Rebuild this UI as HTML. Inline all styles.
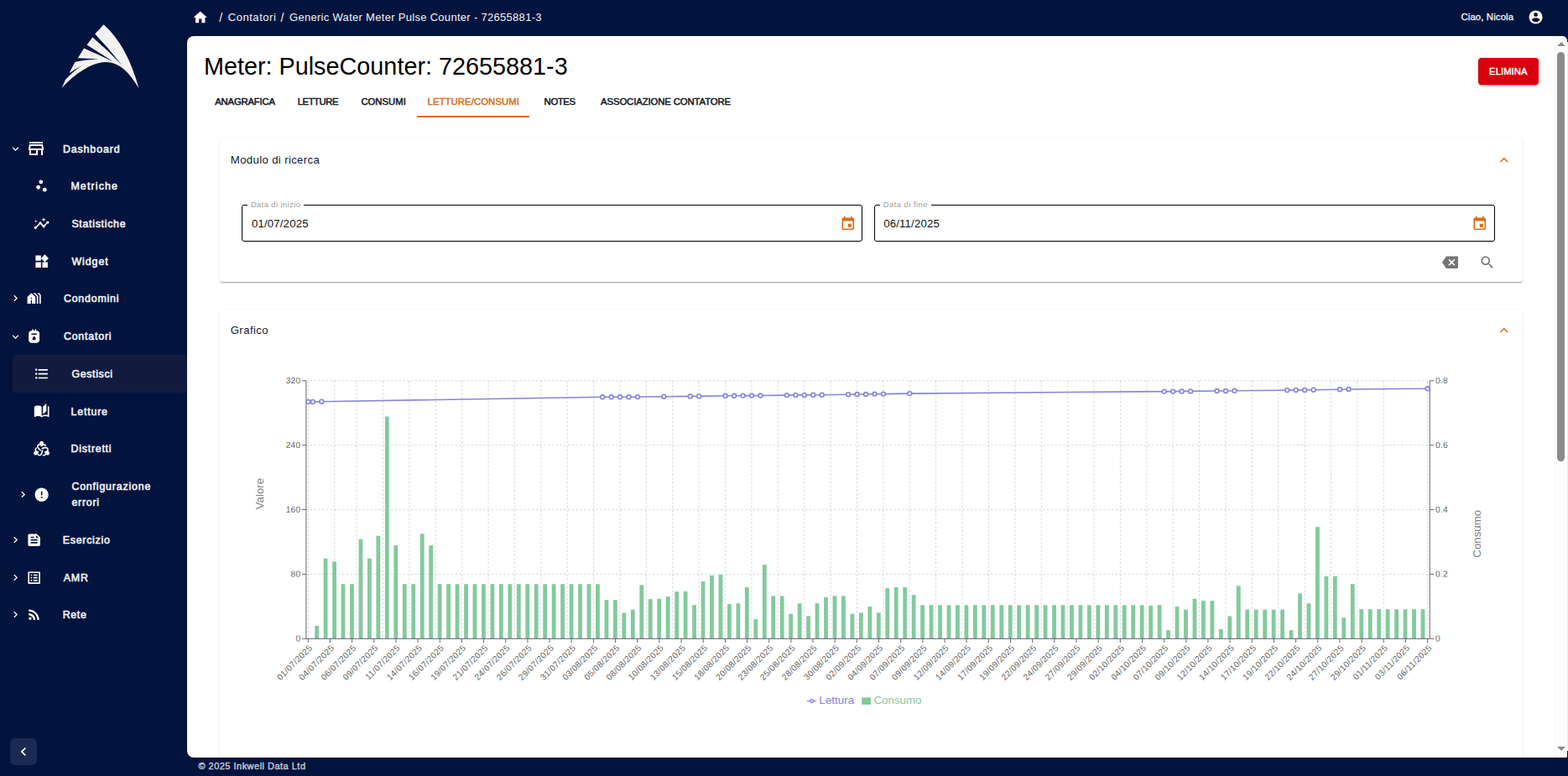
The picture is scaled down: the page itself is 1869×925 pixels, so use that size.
<!DOCTYPE html>
<html lang="it"><head><meta charset="utf-8"><title>Meter: PulseCounter: 72655881-3</title>
<style>
*{box-sizing:border-box}
html,body{margin:0;padding:0}
body{width:1869px;height:925px;overflow:hidden;background:#02143d;font-family:"Liberation Sans", sans-serif;position:relative}
.t{position:absolute;white-space:pre;margin:0;font-weight:400}
.ic{position:absolute;display:block}
.abs{position:absolute}
ul,li{list-style:none;margin:0;padding:0}
button{border:0;padding:0;margin:0;font:inherit}
.sidebar{position:absolute;left:0;top:0;width:223px;height:925px;background:#02143d}
.logo{position:absolute}
.hl{position:absolute;background:#121b3f;border-radius:4px 0 0 4px}
.collapse{position:absolute;left:12px;top:880px;width:32px;height:32px;border-radius:6px;background:#1b2a53}
.topbar{position:absolute;left:223px;top:0;width:1646px;height:43px}
.panel{position:absolute;left:223px;top:43px;width:1645px;height:860px;background:#fff;border-radius:8px 6px 2px 8px;overflow:hidden}
.edge{position:absolute;left:1868px;top:50px;width:1px;height:845px;background:#efefef}
.btn-del{position:absolute;background:#d9000d;border-radius:4px;box-shadow:0 3px 1px -2px rgba(0,0,0,.2),0 2px 2px 0 rgba(0,0,0,.14),0 1px 5px 0 rgba(0,0,0,.12)}
.ind{position:absolute;background:#d5701b}
.card{position:absolute;background:#fff;border-radius:3.2px;box-shadow:0 2px 1px -1px rgba(0,0,0,.2),0 1px 1px 0 rgba(0,0,0,.14),0 1px 3px 0 rgba(0,0,0,.12)}
.card .chart{position:absolute}
.field{position:absolute;border:1px solid #000;border-radius:3px}
.notch{position:absolute;background:#fff}
.sbar{position:absolute;background:#fcfcfc;box-shadow:inset 1px 0 0 #f6f6f6}
.sbar .thumb{position:absolute;left:3px;width:9px;background:#8b8b8b;border-radius:4.5px}
.sbar .arrow{position:absolute;left:2.5px;width:0;height:0;border-left:5px solid transparent;border-right:5px solid transparent}
.sbar .up{top:6.5px;border-bottom:5.5px solid #8b8b8b}
.sbar .down{top:847px;border-top:5.5px solid #8b8b8b}
.footer{position:absolute;left:223px;top:903px;width:1646px;height:22px}
</style></head><body>
<nav class="sidebar">
<svg class="logo" width="223" height="140" viewBox="0 0 223 140" style="left:0;top:0">
<path fill="#f2f2f2" d="M123.6 29.13L113.15 40.6Q130.1 58 145.1 77.5Q128.7 60 110.4 44.5L103.5 53.55Q119.05 63.2 134.5 73.3Q117 65 100.1 57.6L92.8 69.28L117.45 70.2Q100 71.6 89.3 73.9L82.54 87.3Q90 81.9 98.3 77.9Q86.85 84.98 78 95.1L73.5 105.3C88.56 88.02 110.15 74 125.5 74C145.75 74 156.76 91.39 165.4 105Q151.5 54 123.6 29.13Z"/></svg>
<ul class="menu">
<li class="item">
<svg class="ic" viewBox="0 0 24 24" width="15" height="15" fill="#fff" style="left:10.95px;top:169.8px"><path d="M16.59 8.59 12 13.17 7.41 8.59 6 10l6 6 6-6z"/></svg>
<svg class="ic" viewBox="0 0 24 24" width="24" height="24" fill="#fff" style="left:31.1px;top:165.3px"><path d="M18.36 9l.6 3H5.04l.6-3h12.72M20 4H4v2h16V4zm0 3H4l-1 5v2h1v6h10v-6h4v6h2v-6h1v-2l-1-5zM6 18v-4h6v4H6z"/></svg>
<span class="t" style="left:74.9px;top:170px;font-size:12.4px;line-height:17px;color:#f4f5f8;-webkit-text-stroke:0.55px #f4f5f8;letter-spacing:0.887px;">Dashboard</span>
</li>
<li class="item sub">
<svg class="ic" viewBox="0 0 24 24" width="19.3" height="19.3" fill="#fff" style="left:39.75px;top:212.25px"><circle cx="7" cy="14" r="3"/><circle cx="11" cy="6" r="3"/><circle cx="16.6" cy="17.6" r="3"/></svg>
<span class="t" style="left:84.4px;top:214px;font-size:12.4px;line-height:17px;color:#f4f5f8;-webkit-text-stroke:0.55px #f4f5f8;letter-spacing:1.15px;">Metriche</span>
</li>
<li class="item sub">
<svg class="ic" viewBox="0 0 24 24" width="19.3" height="19.3" fill="#fff" style="left:39.95px;top:257.15px"><path d="M21 8c-1.45 0-2.26 1.44-1.93 2.51l-3.55 3.56c-.3-.09-.74-.09-1.04 0l-2.55-2.55C12.27 10.45 11.46 9 10 9c-1.45 0-2.27 1.44-1.93 2.52l-4.56 4.55C2.44 15.74 1 16.55 1 18c0 1.1.9 2 2 2 1.45 0 2.26-1.44 1.93-2.51l4.55-4.56c.3.09.74.09 1.04 0l2.55 2.55C12.73 16.55 13.54 18 15 18c1.45 0 2.27-1.44 1.93-2.52l3.56-3.55c1.07.33 2.51-.48 2.51-1.93 0-1.1-.9-2-2-2zM15 9l.94-2.07L18 6l-2.06-.93L15 3l-.92 2.07L12 6l2.08.93zM3.5 11L4 9l2-.5L4 8l-.5-2L3 8l-2 .5L3 9z"/></svg>
<span class="t" style="left:85.4px;top:259px;font-size:12.4px;line-height:17px;color:#f4f5f8;-webkit-text-stroke:0.55px #f4f5f8;letter-spacing:0.7px;">Statistiche</span>
</li>
<li class="item sub">
<svg class="ic" viewBox="0 0 24 24" width="19.3" height="19.3" fill="#fff" style="left:39.95px;top:301.95px"><path d="M13 13v8h8v-8h-8zM3 21h8v-8H3v8zM3 3v8h8V3H3zm13.66-1.31L11 7.34 16.66 13l5.66-5.66-5.66-5.65z"/></svg>
<span class="t" style="left:85.4px;top:304px;font-size:12.4px;line-height:17px;color:#f4f5f8;-webkit-text-stroke:0.55px #f4f5f8;letter-spacing:0.96px;">Widget</span>
</li>
<li class="item">
<svg class="ic" viewBox="0 0 24 24" width="15" height="15" fill="#fff" style="left:10.95px;top:348px"><path d="M10 6 8.59 7.41 13.17 12l-4.58 4.59L10 18l6-6z"/></svg>
<svg class="ic" viewBox="0 0 24 24" width="19.3" height="19.3" fill="#fff" style="left:30.9px;top:346.15px"><path d="M8 4 2 10v10h5.2v-5.5h1.6V20H14V10L8 4zm.900 8.7H7.1v-1.8h1.8v1.8zM18 20V8.35L13.65 4h-2.83L16 9.18V20h2zm4 0V6.69L19.31 4h-2.83L20 7.52V20h2z"/></svg>
<span class="t" style="left:75.9px;top:348px;font-size:12.4px;line-height:17px;color:#f4f5f8;-webkit-text-stroke:0.55px #f4f5f8;letter-spacing:0.806px;">Condomini</span>
</li>
<li class="item">
<svg class="ic" viewBox="0 0 24 24" width="15" height="15" fill="#fff" style="left:10.95px;top:393.6px"><path d="M16.59 8.59 12 13.17 7.41 8.59 6 10l6 6 6-6z"/></svg>
<svg class="ic" viewBox="0 0 24 24" width="19.3" height="19.3" fill="#fff" style="left:30.9px;top:391.45px"><path d="M16 4h-1V2h-2v2h-2V2H9v2H8C5.79 4 4 5.79 4 8v10c0 2.21 1.79 4 4 4h8c2.21 0 4-1.79 4-4V8c0-2.21-1.79-4-4-4zm-4 14c-1.38 0-2.5-1.1-2.5-2.46 0-1.09.43-1.39 2.5-3.79 2.05 2.38 2.5 2.7 2.5 3.79 0 1.36-1.12 2.46-2.5 2.46zm4-8H8V8h8v2z"/></svg>
<span class="t" style="left:75.9px;top:393px;font-size:12.4px;line-height:17px;color:#f4f5f8;-webkit-text-stroke:0.55px #f4f5f8;letter-spacing:0.8px;">Contatori</span>
</li>
<li class="item active sub">
<div class="hl" style="left:15px;top:423px;width:208px;height:45px"></div>
<svg class="ic" viewBox="0 0 24 24" width="19.3" height="19.3" fill="#fff" style="left:39.95px;top:435.85px"><path d="M4 10.5c-.83 0-1.5.67-1.5 1.5s.67 1.5 1.5 1.5 1.5-.67 1.5-1.5-.67-1.5-1.5-1.5zm0-6c-.83 0-1.5.67-1.5 1.5S3.17 7.5 4 7.5 5.5 6.83 5.5 6 4.83 4.5 4 4.5zm0 12c-.83 0-1.5.68-1.5 1.5s.68 1.5 1.5 1.5 1.5-.68 1.5-1.5-.67-1.5-1.5-1.5zM7 19h14v-2H7v2zm0-6h14v-2H7v2zm0-8v2h14V5H7z"/></svg>
<span class="t" style="left:85.4px;top:438px;font-size:12.4px;line-height:17px;color:#f4f5f8;-webkit-text-stroke:0.55px #f4f5f8;letter-spacing:0.657px;">Gestisci</span>
</li>
<li class="item sub">
<svg class="ic" viewBox="0 0 24 24" width="19.3" height="19.3" fill="#fff" style="left:39.95px;top:480.15px"><path d="M19 1l-5 5v11l5-4.5V1zM1 6v14.65c0 .25.25.5.5.5.1 0 .15-.05.25-.05C3.1 20.45 5.05 20 6.5 20c1.95 0 4.05.4 5.5 1.5V6c-1.45-1.1-3.55-1.5-5.5-1.5S2.45 4.9 1 6zm22 13.5V6c-.6-.45-1.25-.75-2-1v13.5c-1.1-.35-2.3-.5-3.5-.5-1.7 0-4.15.65-5.5 1.5v2c1.35-.85 3.8-1.5 5.5-1.5 1.65 0 3.35.3 4.75 1.05.1.05.15.05.25.05.25 0 .5-.25.5-.5v-1.1z"/></svg>
<span class="t" style="left:84.6px;top:483px;font-size:12.4px;line-height:17px;color:#f4f5f8;-webkit-text-stroke:0.55px #f4f5f8;letter-spacing:0.8px;">Letture</span>
</li>
<li class="item sub">
<svg color="#fff" class="ic" viewBox="0 0 24 24" width="19.3" height="19.3" fill="#fff" style="left:39.8px;top:524.95px"><path d="M10.1 15.9l1.42-1.42C8.79 12.05 7 10.41 7 8.85 7 7.8 7.8 7 8.85 7c1.11 0 1.54.65 2.68 2h.93c1.12-1.31 1.53-2 2.68-2 .87 0 1.55.54 1.77 1.32.35-.04.68-.06 1-.06.36 0 .7.03 1.03.08C18.7 6.43 17.13 5 15.15 5c-.12 0-.23.03-.35.04.12-.33.2-.67.2-1.04 0-1.66-1.34-3-3-3S9 2.34 9 4c0 .37.08.71.2 1.04-.12-.01-.23-.04-.35-.04C6.69 5 5 6.69 5 8.85c0 2.42 2.04 4.31 5.1 7.05z"/><path d="M22.5 16.24c-.32-.18-.66-.29-1-.35.07-.1.15-.18.21-.28 1.08-1.87.46-4.18-1.41-5.26-2.09-1.21-4.76-.39-8.65.9l.52 1.94c3.47-1.14 5.79-1.88 7.14-1.1.91.53 1.2 1.61.69 2.53-.57.98-1.28 1.07-3.23 1.32l-.47.81c.58 1.62.97 2.33.39 3.32-.53.91-1.61 1.2-2.53.68-.06-.03-.11-.09-.17-.13-.3.67-.64 1.24-1.03 1.73.07.04.13.09.2.14 1.87 1.08 4.18.46 5.26-1.41.06-.1.09-.21.14-.32.22.27.48.51.8.69 1.43.83 3.27.34 4.1-1.1s.34-3.27-1.1-4.1z"/><path d="M12.32 14.01c-.74 3.58-1.27 5.95-2.62 6.73-.91.53-2 .24-2.53-.68-.56-.98-.29-1.64.48-3.45l-.47-.81c-1.7-.31-2.5-.33-3.07-1.32-.53-.91-.24-2 .68-2.53.09-.05.19-.08.29-.11-.35-.56-.64-1.17-.82-1.85-.16.07-.32.14-.48.23-1.87 1.08-2.49 3.39-1.41 5.26.06.1.14.18.21.28-.34.06-.68.17-1 .35-1.43.83-1.93 2.66-1.1 4.1s2.66 1.93 4.1 1.1c.32-.18.58-.42.8-.69.05.11.08.22.14.32 1.08 1.87 3.39 2.49 5.26 1.41 2.09-1.21 2.71-3.93 3.55-7.94l-1.95-.52z"/></svg>
<span class="t" style="left:84.6px;top:527px;font-size:12.4px;line-height:17px;color:#f4f5f8;-webkit-text-stroke:0.55px #f4f5f8;letter-spacing:0.738px;">Distretti</span>
</li>
<li class="item sub">
<svg class="ic" viewBox="0 0 24 24" width="15" height="15" fill="#fff" style="left:19.7px;top:581.8px"><path d="M10 6 8.59 7.41 13.17 12l-4.58 4.59L10 18l6-6z"/></svg>
<svg class="ic" viewBox="0 0 24 24" width="19.3" height="19.3" fill="#fff" style="left:39.95px;top:579.95px"><path d="M12 2C6.48 2 2 6.48 2 12s4.48 10 10 10 10-4.48 10-10S17.52 2 12 2zm1 15h-2v-2h2v2zm0-4h-2V7h2v6z"/></svg>
<span class="t" style="left:85.4px;top:572px;font-size:12.4px;line-height:17px;color:#f4f5f8;-webkit-text-stroke:0.55px #f4f5f8;letter-spacing:0.815px;">Configurazione</span>
<span class="t" style="left:85.4px;top:591px;font-size:12.4px;line-height:17px;color:#f4f5f8;-webkit-text-stroke:0.55px #f4f5f8;letter-spacing:0.76px;">errori</span>
</li>
<li class="item">
<svg class="ic" viewBox="0 0 24 24" width="15" height="15" fill="#fff" style="left:10.95px;top:635.8px"><path d="M10 6 8.59 7.41 13.17 12l-4.58 4.59L10 18l6-6z"/></svg>
<svg class="ic" viewBox="0 0 24 24" width="19.3" height="19.3" fill="#fff" style="left:30.9px;top:633.95px"><path d="M16 3H5c-1.1 0-2 .9-2 2v14c0 1.1.9 2 2 2h14c1.1 0 2-.9 2-2V8l-5-5zM7 7h5v2H7V7zm10 10H7v-2h10v2zm0-4H7v-2h10v2zm-2-4V5l4 4h-4z"/></svg>
<span class="t" style="left:74.7px;top:636px;font-size:12.4px;line-height:17px;color:#f4f5f8;-webkit-text-stroke:0.55px #f4f5f8;letter-spacing:0.75px;">Esercizio</span>
</li>
<li class="item">
<svg class="ic" viewBox="0 0 24 24" width="15" height="15" fill="#fff" style="left:10.95px;top:680.6px"><path d="M10 6 8.59 7.41 13.17 12l-4.58 4.59L10 18l6-6z"/></svg>
<svg class="ic" viewBox="0 0 24 24" width="19.3" height="19.3" fill="#fff" style="left:30.9px;top:678.75px"><path d="M19 5v14H5V5h14m1.1-2H3.9c-.5 0-.9.4-.9.9v16.2c0 .4.4.9.9.9h16.2c.4 0 .9-.5.9-.9V3.9c0-.5-.5-.9-.9-.9zM11 7h6v2h-6V7zm0 4h6v2h-6v-2zm0 4h6v2h-6zM7 7h2v2H7zm0 4h2v2H7zm0 4h2v2H7z"/></svg>
<span class="t" style="left:75.7px;top:681px;font-size:12.4px;line-height:17px;color:#f4f5f8;-webkit-text-stroke:0.55px #f4f5f8;letter-spacing:0.9px;">AMR</span>
</li>
<li class="item">
<svg class="ic" viewBox="0 0 24 24" width="15" height="15" fill="#fff" style="left:10.95px;top:725.2px"><path d="M10 6 8.59 7.41 13.17 12l-4.58 4.59L10 18l6-6z"/></svg>
<svg class="ic" viewBox="0 0 24 24" width="19.3" height="19.3" fill="#fff" style="left:30.9px;top:723.35px"><path d="M6.18 15.64a2.18 2.18 0 1 0 0 4.36 2.18 2.18 0 0 0 0-4.36zM4 4.44v2.83c7.03 0 12.73 5.7 12.73 12.73h2.83c0-8.59-6.97-15.56-15.56-15.56zm0 5.66v2.83c3.9 0 7.07 3.17 7.07 7.07h2.83c0-5.47-4.43-9.9-9.9-9.9z"/></svg>
<span class="t" style="left:74.7px;top:725px;font-size:12.4px;line-height:17px;color:#f4f5f8;-webkit-text-stroke:0.55px #f4f5f8;letter-spacing:0.667px;">Rete</span>
</li>
</ul>
<button class="collapse" aria-label="collapse"><svg class="ic" viewBox="0 0 24 24" width="20" height="20" fill="#fff" style="left:5.8px;top:6.4px"><path d="M15.41 7.41 14 6l-6 6 6 6 1.41-1.41L10.83 12z"/></svg></button>
</nav>
<header class="topbar">
<nav class="breadcrumb" aria-label="breadcrumb">
<a class="crumb home"><svg class="ic" viewBox="0 0 24 24" width="19.5" height="19.5" fill="#fff" style="left:6.35px;top:11.15px"><path d="M10 20v-6h4v6h5v-8h3L12 3 2 12h3v8z"/></svg></a>
<span class="t sep" style="left:38.3px;top:11px;font-size:14.3px;line-height:20px;color:#f1f3f7;">/</span>
<a class="t crumb" style="left:48.7px;top:12px;font-size:13px;line-height:18px;color:#f1f3f7;letter-spacing:0.55px;">Contatori</a>
<span class="t sep" style="left:111.5px;top:11px;font-size:14.3px;line-height:20px;color:#f1f3f7;">/</span>
<span class="t crumb current" style="left:122px;top:12px;font-size:13px;line-height:18px;color:#f1f3f7;letter-spacing:0.298px;">Generic Water Meter Pulse Counter - 72655881-3</span>
</nav>
<div class="user">
<span class="t" style="left:1518.4px;top:12px;font-size:11.4px;line-height:16px;color:#f1f3f7;-webkit-text-stroke:0.3px #f1f3f7;letter-spacing:0.118px;">Ciao, Nicola</span>
<svg class="ic" viewBox="0 0 24 24" width="19.2" height="19.2" fill="#fff" style="left:1598px;top:11.1px"><path d="M12 2C6.48 2 2 6.48 2 12s4.48 10 10 10 10-4.48 10-10S17.52 2 12 2zm0 3c1.66 0 3 1.34 3 3s-1.34 3-3 3-3-1.34-3-3 1.34-3 3-3zm0 14.2c-2.5 0-4.71-1.28-6-3.22.03-1.99 4-3.08 6-3.08 1.99 0 5.97 1.09 6 3.08-1.29 1.94-3.5 3.22-6 3.22z"/></svg>
</div>
</header>
<main class="panel">
<div class="page-head">
<h1 class="t" style="left:19.9px;top:18px;font-size:28.8px;line-height:36px;color:#000;">Meter: PulseCounter: 72655881-3</h1>
<button class="btn-del" style="left:1539px;top:26px;width:72px;height:32px">
<span class="t" style="left:13.1px;top:8px;font-size:11.2px;line-height:16px;color:#fff;-webkit-text-stroke:0.45px #fff;letter-spacing:0.1px;">ELIMINA</span>
</button>
</div>
<div class="tabs" role="tablist">
<span class="t tab" style="left:33.2px;top:70px;font-size:11.3px;line-height:16px;color:#111827;-webkit-text-stroke:0.5px #111827;letter-spacing:-0.178px;">ANAGRAFICA</span>
<span class="t tab" style="left:131.7px;top:70px;font-size:11.3px;line-height:16px;color:#111827;-webkit-text-stroke:0.5px #111827;letter-spacing:-0.433px;">LETTURE</span>
<span class="t tab" style="left:207.4px;top:70px;font-size:11.3px;line-height:16px;color:#111827;-webkit-text-stroke:0.5px #111827;letter-spacing:0.017px;">CONSUMI</span>
<span class="t tab active" style="left:286.5px;top:70px;font-size:11.3px;line-height:16px;color:#d5701b;-webkit-text-stroke:0.5px #d5701b;letter-spacing:0.107px;">LETTURE/CONSUMI</span>
<span class="t tab" style="left:425.6px;top:70px;font-size:11.3px;line-height:16px;color:#111827;-webkit-text-stroke:0.5px #111827;letter-spacing:-0.375px;">NOTES</span>
<span class="t tab" style="left:493.05px;top:70px;font-size:11.3px;line-height:16px;color:#111827;-webkit-text-stroke:0.5px #111827;letter-spacing:-0.088px;">ASSOCIAZIONE CONTATORE</span>
<div class="ind" style="left:274px;top:95px;width:134px;height:2px"></div>
</div>
<section class="card search" style="left:39px;top:121.5px;width:1553px;height:171.5px">
<div class="card-head">
<span class="t card-title" style="left:12.8px;top:17.5px;font-size:13.2px;line-height:18px;color:#141a2e;letter-spacing:0.35px;">Modulo di ricerca</span>
<svg class="ic" viewBox="0 0 24 24" width="19.5" height="19.5" fill="#d5701b" style="left:1521.25px;top:16.55px"><path d="m12 8-6 6 1.41 1.41L12 10.83l4.59 4.58L18 14z"/></svg>
</div>
<form class="fields">
<div class="field" style="left:26px;top:79.5px;width:740px;height:44px">
<div class="notch" style="left:6px;top:-2px;width:66.9px;height:3px"></div>
<label class="t" style="left:9.9px;top:-8px;font-size:9.4px;line-height:13px;color:#9e9e9e;letter-spacing:0.415px;">Data di inizio</label>
<span class="t value" style="left:10.9px;top:13px;font-size:13.2px;line-height:18px;color:#111;letter-spacing:0.178px;">01/07/2025</span>
<svg class="ic" viewBox="0 0 24 24" width="19.5" height="19.5" fill="#d5701b" style="left:711.95px;top:12.15px"><path d="M17 12h-5v5h5v-5zM16 1v2H8V1H6v2H5c-1.11 0-1.99.9-1.99 2L3 19c0 1.1.89 2 2 2h14c1.1 0 2-.9 2-2V5c0-1.1-.9-2-2-2h-1V1h-2zm3 18H5V8h14v11z"/></svg>
</div>
<div class="field" style="left:780px;top:79.5px;width:740px;height:44px">
<div class="notch" style="left:6px;top:-2px;width:60.8px;height:3px"></div>
<label class="t" style="left:9.8px;top:-8px;font-size:9.4px;line-height:13px;color:#9e9e9e;letter-spacing:0.482px;">Data di fine</label>
<span class="t value" style="left:10.2px;top:13px;font-size:13.2px;line-height:18px;color:#111;letter-spacing:0.178px;">06/11/2025</span>
<svg class="ic" viewBox="0 0 24 24" width="19.5" height="19.5" fill="#d5701b" style="left:710.85px;top:12.15px"><path d="M17 12h-5v5h5v-5zM16 1v2H8V1H6v2H5c-1.11 0-1.99.9-1.99 2L3 19c0 1.1.89 2 2 2h14c1.1 0 2-.9 2-2V5c0-1.1-.9-2-2-2h-1V1h-2zm3 18H5V8h14v11z"/></svg>
</div>
<div class="actions">
<svg class="ic" viewBox="0 0 24 24" width="19.5" height="19.5" fill="#757575" style="left:1456.95px;top:138.35px"><path d="M22 3H7c-.69 0-1.23.35-1.59.88L0 12l5.41 8.11c.36.53.9.89 1.59.89h15c1.1 0 2-.9 2-2V5c0-1.1-.9-2-2-2zm-3 12.59L17.59 17 14 13.41 10.41 17 9 15.59 12.59 12 9 8.41 10.41 7 14 10.59 17.59 7 19 8.41 15.41 12 19 15.59z"/></svg>
<svg class="ic" viewBox="0 0 24 24" width="19.5" height="19.5" fill="#757575" style="left:1500.95px;top:138.65px"><path d="M15.5 14h-.79l-.28-.27C15.41 12.59 16 11.11 16 9.5 16 5.91 13.09 3 9.5 3S3 5.91 3 9.5 5.91 16 9.5 16c1.61 0 3.09-.59 4.23-1.57l.27.28v.79l5 4.99L20.49 19l-4.99-5zm-6 0C7.01 14 5 11.99 5 9.5S7.01 5 9.5 5 14 7.01 14 9.5 11.99 14 9.5 14z"/></svg>
</div>
</form>
</section>
<section class="card graph" style="left:39px;top:325.5px;width:1553px;height:560px">
<div class="card-head">
<span class="t card-title" style="left:12.7px;top:16.5px;font-size:13.2px;line-height:18px;color:#141a2e;letter-spacing:0.417px;">Grafico</span>
<svg class="ic" viewBox="0 0 24 24" width="19.5" height="19.5" fill="#d5701b" style="left:1521.25px;top:15.55px"><path d="m12 8-6 6 1.41 1.41L12 10.83l4.59 4.58L18 14z"/></svg>
</div>
<svg class="chart" width="1553" height="540" viewBox="262 368 1553 540" style="left:0;top:-0.5px" font-family='"Liberation Sans", sans-serif'>
<g class="grid" stroke="#ccc" stroke-width="0.8" stroke-dasharray="2.4 2.4" fill="none">
<line x1="364.95" y1="761.3" x2="1704.2" y2="761.3"/>
<line x1="364.95" y1="684.42" x2="1704.2" y2="684.42"/>
<line x1="364.95" y1="607.55" x2="1704.2" y2="607.55"/>
<line x1="364.95" y1="530.67" x2="1704.2" y2="530.67"/>
<line x1="364.95" y1="453.8" x2="1704.2" y2="453.8"/>
<line x1="367.3" y1="454.05" x2="367.3" y2="761.3"/>
<line x1="398.7" y1="454.05" x2="398.7" y2="761.3"/>
<line x1="425.1" y1="454.05" x2="425.1" y2="761.3"/>
<line x1="456.49" y1="454.05" x2="456.49" y2="761.3"/>
<line x1="487.88" y1="454.05" x2="487.88" y2="761.3"/>
<line x1="519.27" y1="454.05" x2="519.27" y2="761.3"/>
<line x1="550.66" y1="454.05" x2="550.66" y2="761.3"/>
<line x1="582.05" y1="454.05" x2="582.05" y2="761.3"/>
<line x1="613.44" y1="454.05" x2="613.44" y2="761.3"/>
<line x1="644.83" y1="454.05" x2="644.83" y2="761.3"/>
<line x1="676.22" y1="454.05" x2="676.22" y2="761.3"/>
<line x1="707.61" y1="454.05" x2="707.61" y2="761.3"/>
<line x1="739" y1="454.05" x2="739" y2="761.3"/>
<line x1="770.39" y1="454.05" x2="770.39" y2="761.3"/>
<line x1="801.78" y1="454.05" x2="801.78" y2="761.3"/>
<line x1="833.17" y1="454.05" x2="833.17" y2="761.3"/>
<line x1="864.56" y1="454.05" x2="864.56" y2="761.3"/>
<line x1="895.95" y1="454.05" x2="895.95" y2="761.3"/>
<line x1="927.34" y1="454.05" x2="927.34" y2="761.3"/>
<line x1="958.73" y1="454.05" x2="958.73" y2="761.3"/>
<line x1="990.12" y1="454.05" x2="990.12" y2="761.3"/>
<line x1="1021.51" y1="454.05" x2="1021.51" y2="761.3"/>
<line x1="1052.9" y1="454.05" x2="1052.9" y2="761.3"/>
<line x1="1084.29" y1="454.05" x2="1084.29" y2="761.3"/>
<line x1="1115.68" y1="454.05" x2="1115.68" y2="761.3"/>
<line x1="1147.07" y1="454.05" x2="1147.07" y2="761.3"/>
<line x1="1178.46" y1="454.05" x2="1178.46" y2="761.3"/>
<line x1="1209.85" y1="454.05" x2="1209.85" y2="761.3"/>
<line x1="1241.24" y1="454.05" x2="1241.24" y2="761.3"/>
<line x1="1272.63" y1="454.05" x2="1272.63" y2="761.3"/>
<line x1="1304.02" y1="454.05" x2="1304.02" y2="761.3"/>
<line x1="1335.41" y1="454.05" x2="1335.41" y2="761.3"/>
<line x1="1366.8" y1="454.05" x2="1366.8" y2="761.3"/>
<line x1="1398.19" y1="454.05" x2="1398.19" y2="761.3"/>
<line x1="1429.58" y1="454.05" x2="1429.58" y2="761.3"/>
<line x1="1460.97" y1="454.05" x2="1460.97" y2="761.3"/>
<line x1="1492.36" y1="454.05" x2="1492.36" y2="761.3"/>
<line x1="1523.75" y1="454.05" x2="1523.75" y2="761.3"/>
<line x1="1555.14" y1="454.05" x2="1555.14" y2="761.3"/>
<line x1="1586.53" y1="454.05" x2="1586.53" y2="761.3"/>
<line x1="1617.92" y1="454.05" x2="1617.92" y2="761.3"/>
<line x1="1649.31" y1="454.05" x2="1649.31" y2="761.3"/>
<line x1="1701.6" y1="454.05" x2="1701.6" y2="761.3"/>
</g>
<g class="bars" fill="#82ca9d">
<rect x="375.24" y="746.05" width="4.8" height="15.25"/>
<rect x="385.71" y="665.7" width="4.8" height="95.6"/>
<rect x="396.17" y="669.4" width="4.8" height="91.9"/>
<rect x="406.63" y="696.24" width="4.8" height="65.06"/>
<rect x="417.1" y="696.24" width="4.8" height="65.06"/>
<rect x="427.56" y="642.6" width="4.8" height="118.7"/>
<rect x="438.02" y="665.7" width="4.8" height="95.6"/>
<rect x="448.48" y="638.7" width="4.8" height="122.6"/>
<rect x="458.95" y="496.5" width="4.8" height="264.8"/>
<rect x="469.41" y="650.1" width="4.8" height="111.2"/>
<rect x="479.87" y="696.24" width="4.8" height="65.06"/>
<rect x="490.34" y="696.24" width="4.8" height="65.06"/>
<rect x="500.8" y="636.3" width="4.8" height="125"/>
<rect x="511.26" y="650.1" width="4.8" height="111.2"/>
<rect x="521.73" y="696.24" width="4.8" height="65.06"/>
<rect x="532.19" y="696.24" width="4.8" height="65.06"/>
<rect x="542.65" y="696.24" width="4.8" height="65.06"/>
<rect x="553.11" y="696.24" width="4.8" height="65.06"/>
<rect x="563.58" y="696.24" width="4.8" height="65.06"/>
<rect x="574.04" y="696.24" width="4.8" height="65.06"/>
<rect x="584.5" y="696.24" width="4.8" height="65.06"/>
<rect x="594.97" y="696.24" width="4.8" height="65.06"/>
<rect x="605.43" y="696.24" width="4.8" height="65.06"/>
<rect x="615.89" y="696.24" width="4.8" height="65.06"/>
<rect x="626.36" y="696.24" width="4.8" height="65.06"/>
<rect x="636.82" y="696.24" width="4.8" height="65.06"/>
<rect x="647.28" y="696.24" width="4.8" height="65.06"/>
<rect x="657.74" y="696.24" width="4.8" height="65.06"/>
<rect x="668.21" y="696.24" width="4.8" height="65.06"/>
<rect x="678.67" y="696.24" width="4.8" height="65.06"/>
<rect x="689.13" y="696.24" width="4.8" height="65.06"/>
<rect x="699.6" y="696.24" width="4.8" height="65.06"/>
<rect x="710.06" y="696.24" width="4.8" height="65.06"/>
<rect x="720.52" y="715.2" width="4.8" height="46.1"/>
<rect x="730.99" y="715.2" width="4.8" height="46.1"/>
<rect x="741.45" y="730.4" width="4.8" height="30.9"/>
<rect x="751.91" y="726.7" width="4.8" height="34.6"/>
<rect x="762.37" y="697.3" width="4.8" height="64"/>
<rect x="772.84" y="714.1" width="4.8" height="47.2"/>
<rect x="783.3" y="713.7" width="4.8" height="47.6"/>
<rect x="793.76" y="711.1" width="4.8" height="50.2"/>
<rect x="804.23" y="705.2" width="4.8" height="56.1"/>
<rect x="814.69" y="704.9" width="4.8" height="56.4"/>
<rect x="825.15" y="721.2" width="4.8" height="40.1"/>
<rect x="835.62" y="693.1" width="4.8" height="68.2"/>
<rect x="846.08" y="685.8" width="4.8" height="75.5"/>
<rect x="856.54" y="685" width="4.8" height="76.3"/>
<rect x="867" y="720.1" width="4.8" height="41.2"/>
<rect x="877.47" y="719.2" width="4.8" height="42.1"/>
<rect x="887.93" y="699.9" width="4.8" height="61.4"/>
<rect x="898.39" y="738.1" width="4.8" height="23.2"/>
<rect x="908.86" y="673.1" width="4.8" height="88.2"/>
<rect x="919.32" y="710.4" width="4.8" height="50.9"/>
<rect x="929.78" y="710.4" width="4.8" height="50.9"/>
<rect x="940.25" y="731.7" width="4.8" height="29.6"/>
<rect x="950.71" y="719.2" width="4.8" height="42.1"/>
<rect x="961.17" y="734.3" width="4.8" height="27"/>
<rect x="971.63" y="719.2" width="4.8" height="42.1"/>
<rect x="982.1" y="711.9" width="4.8" height="49.4"/>
<rect x="992.56" y="710.4" width="4.8" height="50.9"/>
<rect x="1003.02" y="710.4" width="4.8" height="50.9"/>
<rect x="1013.49" y="731.7" width="4.8" height="29.6"/>
<rect x="1023.95" y="730.4" width="4.8" height="30.9"/>
<rect x="1034.41" y="723.1" width="4.8" height="38.2"/>
<rect x="1044.87" y="730.4" width="4.8" height="30.9"/>
<rect x="1055.34" y="701.2" width="4.8" height="60.1"/>
<rect x="1065.8" y="699.9" width="4.8" height="61.4"/>
<rect x="1076.26" y="699.9" width="4.8" height="61.4"/>
<rect x="1086.73" y="709.1" width="4.8" height="52.2"/>
<rect x="1097.19" y="721.3" width="4.8" height="40"/>
<rect x="1107.65" y="721.3" width="4.8" height="40"/>
<rect x="1118.12" y="721.3" width="4.8" height="40"/>
<rect x="1128.58" y="721.3" width="4.8" height="40"/>
<rect x="1139.04" y="721.3" width="4.8" height="40"/>
<rect x="1149.5" y="721.3" width="4.8" height="40"/>
<rect x="1159.97" y="721.3" width="4.8" height="40"/>
<rect x="1170.43" y="721.3" width="4.8" height="40"/>
<rect x="1180.89" y="721.3" width="4.8" height="40"/>
<rect x="1191.36" y="721.3" width="4.8" height="40"/>
<rect x="1201.82" y="721.3" width="4.8" height="40"/>
<rect x="1212.28" y="721.3" width="4.8" height="40"/>
<rect x="1222.75" y="721.3" width="4.8" height="40"/>
<rect x="1233.21" y="721.3" width="4.8" height="40"/>
<rect x="1243.67" y="721.3" width="4.8" height="40"/>
<rect x="1254.13" y="721.3" width="4.8" height="40"/>
<rect x="1264.6" y="721.3" width="4.8" height="40"/>
<rect x="1275.06" y="721.3" width="4.8" height="40"/>
<rect x="1285.52" y="721.3" width="4.8" height="40"/>
<rect x="1295.99" y="721.3" width="4.8" height="40"/>
<rect x="1306.45" y="721.3" width="4.8" height="40"/>
<rect x="1316.91" y="721.3" width="4.8" height="40"/>
<rect x="1327.38" y="721.3" width="4.8" height="40"/>
<rect x="1337.84" y="721.3" width="4.8" height="40"/>
<rect x="1348.3" y="721.3" width="4.8" height="40"/>
<rect x="1358.76" y="721.3" width="4.8" height="40"/>
<rect x="1369.23" y="721.8" width="4.8" height="39.5"/>
<rect x="1379.69" y="721.2" width="4.8" height="40.1"/>
<rect x="1390.15" y="751.2" width="4.8" height="10.1"/>
<rect x="1400.62" y="723.1" width="4.8" height="38.2"/>
<rect x="1411.08" y="726.7" width="4.8" height="34.6"/>
<rect x="1421.54" y="713.7" width="4.8" height="47.6"/>
<rect x="1432.01" y="716.1" width="4.8" height="45.2"/>
<rect x="1442.47" y="716.1" width="4.8" height="45.2"/>
<rect x="1452.93" y="749.9" width="4.8" height="11.4"/>
<rect x="1463.39" y="734.5" width="4.8" height="26.8"/>
<rect x="1473.86" y="698.3" width="4.8" height="63"/>
<rect x="1484.32" y="726.7" width="4.8" height="34.6"/>
<rect x="1494.78" y="726.7" width="4.8" height="34.6"/>
<rect x="1505.25" y="726.7" width="4.8" height="34.6"/>
<rect x="1515.71" y="726.7" width="4.8" height="34.6"/>
<rect x="1526.17" y="726.7" width="4.8" height="34.6"/>
<rect x="1536.64" y="751.2" width="4.8" height="10.1"/>
<rect x="1547.1" y="707.4" width="4.8" height="53.9"/>
<rect x="1557.56" y="719.2" width="4.8" height="42.1"/>
<rect x="1568.02" y="628.1" width="4.8" height="133.2"/>
<rect x="1578.49" y="686.9" width="4.8" height="74.4"/>
<rect x="1588.95" y="686.9" width="4.8" height="74.4"/>
<rect x="1599.41" y="736.3" width="4.8" height="25"/>
<rect x="1609.88" y="696.1" width="4.8" height="65.2"/>
<rect x="1620.34" y="726.2" width="4.8" height="35.1"/>
<rect x="1630.8" y="726.2" width="4.8" height="35.1"/>
<rect x="1641.27" y="726.2" width="4.8" height="35.1"/>
<rect x="1651.73" y="726.2" width="4.8" height="35.1"/>
<rect x="1662.19" y="726.2" width="4.8" height="35.1"/>
<rect x="1672.65" y="726.2" width="4.8" height="35.1"/>
<rect x="1683.12" y="726.2" width="4.8" height="35.1"/>
<rect x="1693.58" y="726.2" width="4.8" height="35.1"/>
</g>
<g class="xaxis" stroke="#666" stroke-width="1" fill="none"><line x1="364.95" y1="761.3" x2="1704.2" y2="761.3"/>
<line x1="367.3" y1="761.3" x2="367.3" y2="766.1"/>
<line x1="393.46" y1="761.3" x2="393.46" y2="766.1"/>
<line x1="419.63" y1="761.3" x2="419.63" y2="766.1"/>
<line x1="445.79" y1="761.3" x2="445.79" y2="766.1"/>
<line x1="471.95" y1="761.3" x2="471.95" y2="766.1"/>
<line x1="498.11" y1="761.3" x2="498.11" y2="766.1"/>
<line x1="524.28" y1="761.3" x2="524.28" y2="766.1"/>
<line x1="550.44" y1="761.3" x2="550.44" y2="766.1"/>
<line x1="576.6" y1="761.3" x2="576.6" y2="766.1"/>
<line x1="602.76" y1="761.3" x2="602.76" y2="766.1"/>
<line x1="628.93" y1="761.3" x2="628.93" y2="766.1"/>
<line x1="655.09" y1="761.3" x2="655.09" y2="766.1"/>
<line x1="681.25" y1="761.3" x2="681.25" y2="766.1"/>
<line x1="707.42" y1="761.3" x2="707.42" y2="766.1"/>
<line x1="733.58" y1="761.3" x2="733.58" y2="766.1"/>
<line x1="759.74" y1="761.3" x2="759.74" y2="766.1"/>
<line x1="785.9" y1="761.3" x2="785.9" y2="766.1"/>
<line x1="812.07" y1="761.3" x2="812.07" y2="766.1"/>
<line x1="838.23" y1="761.3" x2="838.23" y2="766.1"/>
<line x1="864.39" y1="761.3" x2="864.39" y2="766.1"/>
<line x1="890.55" y1="761.3" x2="890.55" y2="766.1"/>
<line x1="916.72" y1="761.3" x2="916.72" y2="766.1"/>
<line x1="942.88" y1="761.3" x2="942.88" y2="766.1"/>
<line x1="969.04" y1="761.3" x2="969.04" y2="766.1"/>
<line x1="995.21" y1="761.3" x2="995.21" y2="766.1"/>
<line x1="1021.37" y1="761.3" x2="1021.37" y2="766.1"/>
<line x1="1047.53" y1="761.3" x2="1047.53" y2="766.1"/>
<line x1="1073.69" y1="761.3" x2="1073.69" y2="766.1"/>
<line x1="1099.86" y1="761.3" x2="1099.86" y2="766.1"/>
<line x1="1126.02" y1="761.3" x2="1126.02" y2="766.1"/>
<line x1="1152.18" y1="761.3" x2="1152.18" y2="766.1"/>
<line x1="1178.35" y1="761.3" x2="1178.35" y2="766.1"/>
<line x1="1204.51" y1="761.3" x2="1204.51" y2="766.1"/>
<line x1="1230.67" y1="761.3" x2="1230.67" y2="766.1"/>
<line x1="1256.83" y1="761.3" x2="1256.83" y2="766.1"/>
<line x1="1283" y1="761.3" x2="1283" y2="766.1"/>
<line x1="1309.16" y1="761.3" x2="1309.16" y2="766.1"/>
<line x1="1335.32" y1="761.3" x2="1335.32" y2="766.1"/>
<line x1="1361.48" y1="761.3" x2="1361.48" y2="766.1"/>
<line x1="1387.65" y1="761.3" x2="1387.65" y2="766.1"/>
<line x1="1413.81" y1="761.3" x2="1413.81" y2="766.1"/>
<line x1="1439.97" y1="761.3" x2="1439.97" y2="766.1"/>
<line x1="1466.14" y1="761.3" x2="1466.14" y2="766.1"/>
<line x1="1492.3" y1="761.3" x2="1492.3" y2="766.1"/>
<line x1="1518.46" y1="761.3" x2="1518.46" y2="766.1"/>
<line x1="1544.62" y1="761.3" x2="1544.62" y2="766.1"/>
<line x1="1570.79" y1="761.3" x2="1570.79" y2="766.1"/>
<line x1="1596.95" y1="761.3" x2="1596.95" y2="766.1"/>
<line x1="1623.11" y1="761.3" x2="1623.11" y2="766.1"/>
<line x1="1649.27" y1="761.3" x2="1649.27" y2="766.1"/>
<line x1="1675.44" y1="761.3" x2="1675.44" y2="766.1"/>
<line x1="1701.6" y1="761.3" x2="1701.6" y2="766.1"/>
</g>
<g class="xlabels" fill="#666" font-size="10.3" text-anchor="end" letter-spacing="0.3">
<text transform="translate(372.9 772.9) rotate(-45)">01/07/2025</text>
<text transform="translate(399.06 772.9) rotate(-45)">04/07/2025</text>
<text transform="translate(425.23 772.9) rotate(-45)">06/07/2025</text>
<text transform="translate(451.39 772.9) rotate(-45)">09/07/2025</text>
<text transform="translate(477.55 772.9) rotate(-45)">11/07/2025</text>
<text transform="translate(503.71 772.9) rotate(-45)">14/07/2025</text>
<text transform="translate(529.88 772.9) rotate(-45)">16/07/2025</text>
<text transform="translate(556.04 772.9) rotate(-45)">19/07/2025</text>
<text transform="translate(582.2 772.9) rotate(-45)">21/07/2025</text>
<text transform="translate(608.36 772.9) rotate(-45)">24/07/2025</text>
<text transform="translate(634.53 772.9) rotate(-45)">26/07/2025</text>
<text transform="translate(660.69 772.9) rotate(-45)">29/07/2025</text>
<text transform="translate(686.85 772.9) rotate(-45)">31/07/2025</text>
<text transform="translate(713.02 772.9) rotate(-45)">03/08/2025</text>
<text transform="translate(739.18 772.9) rotate(-45)">05/08/2025</text>
<text transform="translate(765.34 772.9) rotate(-45)">08/08/2025</text>
<text transform="translate(791.5 772.9) rotate(-45)">10/08/2025</text>
<text transform="translate(817.67 772.9) rotate(-45)">13/08/2025</text>
<text transform="translate(843.83 772.9) rotate(-45)">15/08/2025</text>
<text transform="translate(869.99 772.9) rotate(-45)">18/08/2025</text>
<text transform="translate(896.15 772.9) rotate(-45)">20/08/2025</text>
<text transform="translate(922.32 772.9) rotate(-45)">23/08/2025</text>
<text transform="translate(948.48 772.9) rotate(-45)">25/08/2025</text>
<text transform="translate(974.64 772.9) rotate(-45)">28/08/2025</text>
<text transform="translate(1000.81 772.9) rotate(-45)">30/08/2025</text>
<text transform="translate(1026.97 772.9) rotate(-45)">02/09/2025</text>
<text transform="translate(1053.13 772.9) rotate(-45)">04/09/2025</text>
<text transform="translate(1079.29 772.9) rotate(-45)">07/09/2025</text>
<text transform="translate(1105.46 772.9) rotate(-45)">09/09/2025</text>
<text transform="translate(1131.62 772.9) rotate(-45)">12/09/2025</text>
<text transform="translate(1157.78 772.9) rotate(-45)">14/09/2025</text>
<text transform="translate(1183.95 772.9) rotate(-45)">17/09/2025</text>
<text transform="translate(1210.11 772.9) rotate(-45)">19/09/2025</text>
<text transform="translate(1236.27 772.9) rotate(-45)">22/09/2025</text>
<text transform="translate(1262.43 772.9) rotate(-45)">24/09/2025</text>
<text transform="translate(1288.6 772.9) rotate(-45)">27/09/2025</text>
<text transform="translate(1314.76 772.9) rotate(-45)">29/09/2025</text>
<text transform="translate(1340.92 772.9) rotate(-45)">02/10/2025</text>
<text transform="translate(1367.08 772.9) rotate(-45)">04/10/2025</text>
<text transform="translate(1393.25 772.9) rotate(-45)">07/10/2025</text>
<text transform="translate(1419.41 772.9) rotate(-45)">09/10/2025</text>
<text transform="translate(1445.57 772.9) rotate(-45)">12/10/2025</text>
<text transform="translate(1471.74 772.9) rotate(-45)">14/10/2025</text>
<text transform="translate(1497.9 772.9) rotate(-45)">17/10/2025</text>
<text transform="translate(1524.06 772.9) rotate(-45)">19/10/2025</text>
<text transform="translate(1550.22 772.9) rotate(-45)">22/10/2025</text>
<text transform="translate(1576.39 772.9) rotate(-45)">24/10/2025</text>
<text transform="translate(1602.55 772.9) rotate(-45)">27/10/2025</text>
<text transform="translate(1628.71 772.9) rotate(-45)">29/10/2025</text>
<text transform="translate(1654.87 772.9) rotate(-45)">01/11/2025</text>
<text transform="translate(1681.04 772.9) rotate(-45)">03/11/2025</text>
<text transform="translate(1707.2 772.9) rotate(-45)">06/11/2025</text>
</g>
<g class="yaxis" stroke="#666" stroke-width="1" fill="none"><line x1="364.95" y1="453.8" x2="364.95" y2="761.3"/><line x1="1704.2" y1="453.8" x2="1704.2" y2="761.3"/>
<line x1="360.15" y1="761.3" x2="364.95" y2="761.3"/><line x1="1704.2" y1="761.3" x2="1709" y2="761.3"/>
<line x1="360.15" y1="684.42" x2="364.95" y2="684.42"/><line x1="1704.2" y1="684.42" x2="1709" y2="684.42"/>
<line x1="360.15" y1="607.55" x2="364.95" y2="607.55"/><line x1="1704.2" y1="607.55" x2="1709" y2="607.55"/>
<line x1="360.15" y1="530.67" x2="364.95" y2="530.67"/><line x1="1704.2" y1="530.67" x2="1709" y2="530.67"/>
<line x1="360.15" y1="453.8" x2="364.95" y2="453.8"/><line x1="1704.2" y1="453.8" x2="1709" y2="453.8"/>
</g>
<g class="ylabels" fill="#666" font-size="10.2" letter-spacing="0.3">
<text transform="translate(358.55 764.5) rotate(0.03)" text-anchor="end">0</text>
<text transform="translate(1711 764.5) rotate(0.03)" text-anchor="start">0</text>
<text transform="translate(358.55 687.62) rotate(0.03)" text-anchor="end">80</text>
<text transform="translate(1711 687.62) rotate(0.03)" text-anchor="start">0.2</text>
<text transform="translate(358.55 610.75) rotate(0.03)" text-anchor="end">160</text>
<text transform="translate(1711 610.75) rotate(0.03)" text-anchor="start">0.4</text>
<text transform="translate(358.55 533.88) rotate(0.03)" text-anchor="end">240</text>
<text transform="translate(1711 533.88) rotate(0.03)" text-anchor="start">0.6</text>
<text transform="translate(358.55 457) rotate(0.03)" text-anchor="end">320</text>
<text transform="translate(1711 457) rotate(0.03)" text-anchor="start">0.8</text>
</g>
<text class="ytitle" fill="#808080" font-size="13.3" textLength="37.4" lengthAdjust="spacing" transform="translate(314.3 607.3) rotate(-90)">Valore</text>
<text class="ytitle" fill="#808080" font-size="13.3" textLength="56.9" lengthAdjust="spacing" transform="translate(1765.4 664.7) rotate(-90)">Consumo</text>
<path class="line" fill="none" stroke="#8884d8" stroke-width="1.6" d="M367.3,478.9L372.86,478.9L383.32,478.7L718.14,473.3L728.6,473.3L739.07,473.3L749.53,473.3L759.99,473.1L791.38,472.7L822.77,472.4L833.23,472.4L864.62,471.8L875.09,471.8L885.55,471.6L896.01,471.6L906.47,471.5L937.86,471.1L948.33,470.9L958.79,470.9L969.25,470.7L979.72,470.7L1011.1,470.2L1021.57,470L1032.03,470L1042.49,469.6L1052.96,469.6L1084.35,469.1L1387.77,466.6L1398.24,466.6L1408.7,466.4L1419.16,466.4L1450.55,466L1461.01,466L1471.48,465.8L1534.25,465.1L1544.72,464.9L1555.18,464.9L1565.64,464.7L1597.03,464.2L1607.5,464L1701.6,463.3"/>
<g class="dots" fill="#fff" stroke="#8884d8" stroke-width="1.6">
<circle cx="367.3" cy="478.9" r="2.4"/>
<circle cx="372.86" cy="478.9" r="2.4"/>
<circle cx="383.32" cy="478.7" r="2.4"/>
<circle cx="718.14" cy="473.3" r="2.4"/>
<circle cx="728.6" cy="473.3" r="2.4"/>
<circle cx="739.07" cy="473.3" r="2.4"/>
<circle cx="749.53" cy="473.3" r="2.4"/>
<circle cx="759.99" cy="473.1" r="2.4"/>
<circle cx="791.38" cy="472.7" r="2.4"/>
<circle cx="822.77" cy="472.4" r="2.4"/>
<circle cx="833.23" cy="472.4" r="2.4"/>
<circle cx="864.62" cy="471.8" r="2.4"/>
<circle cx="875.09" cy="471.8" r="2.4"/>
<circle cx="885.55" cy="471.6" r="2.4"/>
<circle cx="896.01" cy="471.6" r="2.4"/>
<circle cx="906.47" cy="471.5" r="2.4"/>
<circle cx="937.86" cy="471.1" r="2.4"/>
<circle cx="948.33" cy="470.9" r="2.4"/>
<circle cx="958.79" cy="470.9" r="2.4"/>
<circle cx="969.25" cy="470.7" r="2.4"/>
<circle cx="979.72" cy="470.7" r="2.4"/>
<circle cx="1011.1" cy="470.2" r="2.4"/>
<circle cx="1021.57" cy="470" r="2.4"/>
<circle cx="1032.03" cy="470" r="2.4"/>
<circle cx="1042.49" cy="469.6" r="2.4"/>
<circle cx="1052.96" cy="469.6" r="2.4"/>
<circle cx="1084.35" cy="469.1" r="2.4"/>
<circle cx="1387.77" cy="466.6" r="2.4"/>
<circle cx="1398.24" cy="466.6" r="2.4"/>
<circle cx="1408.7" cy="466.4" r="2.4"/>
<circle cx="1419.16" cy="466.4" r="2.4"/>
<circle cx="1450.55" cy="466" r="2.4"/>
<circle cx="1461.01" cy="466" r="2.4"/>
<circle cx="1471.48" cy="465.8" r="2.4"/>
<circle cx="1534.25" cy="465.1" r="2.4"/>
<circle cx="1544.72" cy="464.9" r="2.4"/>
<circle cx="1555.18" cy="464.9" r="2.4"/>
<circle cx="1565.64" cy="464.7" r="2.4"/>
<circle cx="1597.03" cy="464.2" r="2.4"/>
<circle cx="1607.5" cy="464" r="2.4"/>
<circle cx="1701.6" cy="463.3" r="2.4"/>
</g>
<g class="legend" font-size="13.3">
<path d="M962 835.6h3.7a1.85 1.85 0 1 1 3.7 0h3.6M969.4 835.6a1.85 1.85 0 1 1-3.7 0" fill="none" stroke="#8884d8" stroke-width="1.4"/>
<text x="976.2" y="838.9" fill="#8884d8" textLength="42" lengthAdjust="spacing">Lettura</text>
<rect x="1027.2" y="831.4" width="10.8" height="8.5" fill="#82ca9d"/>
<text x="1041.5" y="838.9" fill="#82ca9d" textLength="57" lengthAdjust="spacing">Consumo</text>
</g>
</svg>
</section>
<div class="sbar" style="left:1630px;top:0;width:15px;height:860px">
<div class="arrow up"></div><div class="thumb" style="top:19px;height:488px"></div><div class="arrow down"></div></div>
</main>
<div class="edge"></div>
<footer class="footer"><span class="t" style="left:13.4px;top:3px;font-size:11px;line-height:15px;color:#c4c8d4;-webkit-text-stroke:0.4px #c4c8d4;letter-spacing:0.486px;">© 2025 Inkwell Data Ltd</span></footer>
</body></html>
